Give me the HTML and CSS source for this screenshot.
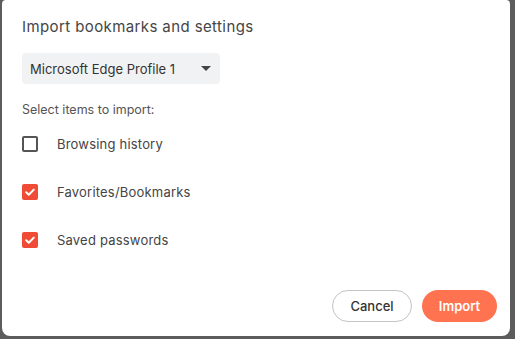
FILE: index.html
```html
<!DOCTYPE html>
<html lang="en">
<head>
  <meta charset="UTF-8" />
  <title>Import bookmarks and settings</title>
  <link rel="stylesheet" href="styles.css">
</head>
<body>
  <div class="dialog">
    <h2 class="title">Import bookmarks and settings</h2>
    <div class="select">
      <span>Microsoft Edge Profile 1</span>
      <span class="caret"></span>
    </div>
    <div class="hint">Select items to import:</div>
    <div class="items">
      <label class="item">
        <span class="box"></span>
        <span>Browsing history</span>
      </label>
      <label class="item">
        <span class="box checked">
          <svg viewBox="0 0 16 16" width="16" height="16"><path d="M4.2 8.3l2.6 2.5 5-5.2" fill="none" stroke="#fff" stroke-width="2" stroke-linecap="round" stroke-linejoin="round"/></svg>
        </span>
        <span>Favorites/Bookmarks</span>
      </label>
      <label class="item">
        <span class="box checked">
          <svg viewBox="0 0 16 16" width="16" height="16"><path d="M4.2 8.3l2.6 2.5 5-5.2" fill="none" stroke="#fff" stroke-width="2" stroke-linecap="round" stroke-linejoin="round"/></svg>
        </span>
        <span>Saved passwords</span>
      </label>
    </div>
    <div class="actions">
      <button class="btn cancel">Cancel</button>
      <button class="btn import">Import</button>
    </div>
  </div>
</body>
</html>
```

FILE: styles.css
```css
* { box-sizing: border-box; }
html, body {
  margin: 0;
  padding: 0;
}
body {
  background: #5c5c5c;
  font-family: Inter, "Noto Sans", sans-serif;
  color: #444;
  height: 339px;
  overflow: hidden;
}
.dialog {
  margin: 0 5px 0 2px;
  height: 336px;
  background: #fff;
  border-radius: 4px 4px 8px 8px;
  padding: 17px 13px 14px 20px;
  display: flex;
  flex-direction: column;
}
.title {
  margin: 0;
  font-size: 15px;
  font-weight: 400;
  line-height: 20px;
  letter-spacing: 0.4px;
  color: #454545;
}
.select {
  margin-top: 16px;
  width: 198px;
  height: 31px;
  background: #f1f2f3;
  border-radius: 4px;
  display: flex;
  align-items: center;
  justify-content: space-between;
  padding: 0 9px 0 8px;
  font-size: 13px;
  color: #333;
}
.caret {
  width: 0;
  height: 0;
  border-left: 5px solid transparent;
  border-right: 5px solid transparent;
  border-top: 5px solid #444;
}
.hint {
  margin-top: 17px;
  font-size: 12.5px;
  line-height: 18px;
  color: #555;
}
.items {
  display: flex;
  flex-direction: column;
  margin-top: 1px;
}
.item {
  height: 48px;
  display: flex;
  align-items: center;
  gap: 19px;
  font-size: 13px;
  letter-spacing: 0.2px;
  color: #444;
}
.box {
  width: 16px;
  height: 16px;
  border: 2px solid #555;
  border-radius: 2px;
  display: flex;
}
.box.checked {
  border: none;
  background: #f04b35;
}
.actions {
  margin-top: auto;
  display: flex;
  justify-content: flex-end;
  gap: 10px;
}
.btn {
  height: 32px;
  border-radius: 16px;
  font-family: inherit;
  font-size: 13px;
  font-weight: 500;
  padding: 0;
}
.cancel {
  width: 80px;
  background: #fff;
  border: 1px solid #c4c4c4;
  color: #333;
}
.import {
  width: 75px;
  background: #ff7350;
  border: none;
  color: #fff;
  font-weight: 600;
}
```
